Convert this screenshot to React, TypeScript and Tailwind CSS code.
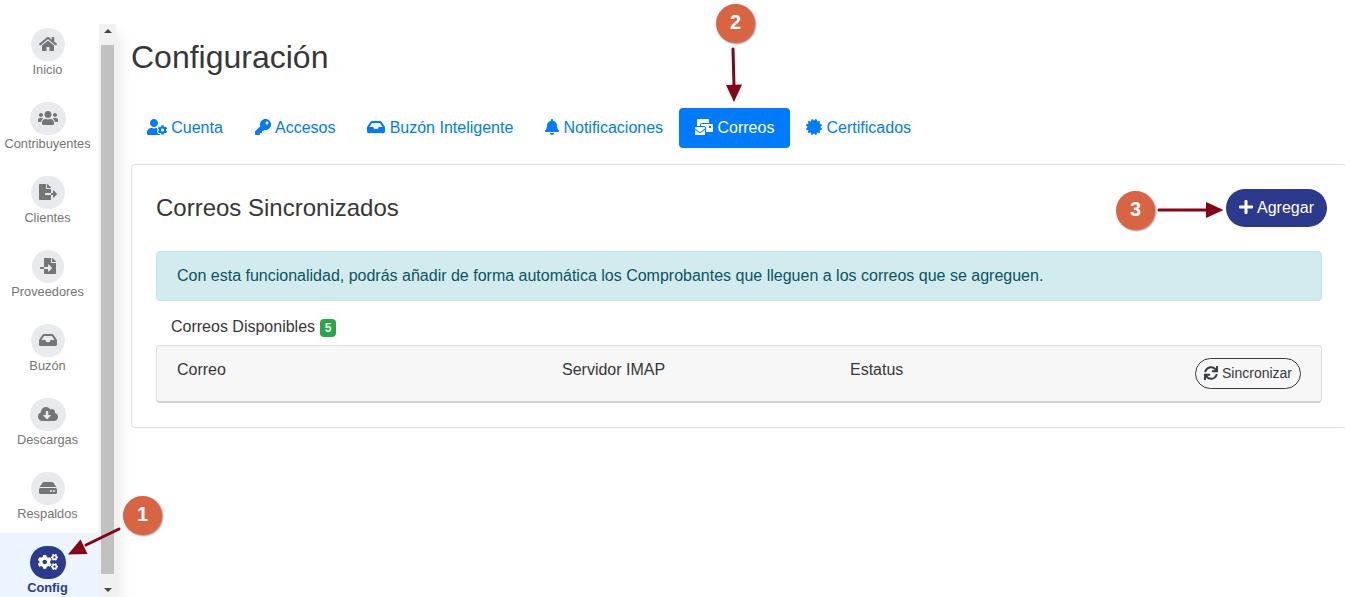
import type { ReactNode } from "react";
import {
  FaBell,
  FaCertificate,
  FaCloudDownloadAlt,
  FaCogs,
  FaFileExport,
  FaFileImport,
  FaHdd,
  FaHome,
  FaInbox,
  FaKey,
  FaMailBulk,
  FaPlus,
  FaSync,
  FaUserCog,
  FaUsers,
} from "react-icons/fa";

type Entry = { label: string; icon: ReactNode; active?: boolean };

const menu: Entry[] = [
  { label: "Inicio", icon: <FaHome className="h-4 w-[18px]" /> },
  { label: "Contribuyentes", icon: <FaUsers className="h-4 w-5" /> },
  { label: "Clientes", icon: <FaFileExport className="h-4 w-[18px]" /> },
  { label: "Proveedores", icon: <FaFileImport className="h-4 w-4" /> },
  { label: "Buzón", icon: <FaInbox className="h-4 w-[18px]" /> },
  { label: "Descargas", icon: <FaCloudDownloadAlt className="h-4 w-5" /> },
  { label: "Respaldos", icon: <FaHdd className="h-4 w-[18px]" /> },
  { label: "Config", icon: <FaCogs className="h-4 w-5" />, active: true },
];

const tabs: Entry[] = [
  { label: "Cuenta", icon: <FaUserCog className="h-4 w-5" /> },
  { label: "Accesos", icon: <FaKey className="h-4 w-4" /> },
  { label: "Buzón Inteligente", icon: <FaInbox className="h-4 w-[18px]" /> },
  { label: "Notificaciones", icon: <FaBell className="h-4 w-[14px]" /> },
  { label: "Correos", icon: <FaMailBulk className="h-4 w-[18px]" />, active: true },
  { label: "Certificados", icon: <FaCertificate className="h-4 w-4" /> },
];

function Sidebar() {
  return (
    <aside className="flex h-full shrink-0 pt-[15px]">
      <nav className="z-10 w-[99px] bg-white">
        {menu.map((item) => (
          <a
            key={item.label}
            className={
              item.active
                ? "flex h-[74px] w-[99px] flex-col items-center bg-[#ebf4ff] pt-[13px] pr-[3px] text-[12.8px] leading-[16px] font-bold text-[#2b3a8c]"
                : "flex h-[74px] w-[99px] flex-col items-center pt-[13px] pr-[3px] text-[12.8px] leading-[16px] text-[#757575]"
            }
          >
            <span
              className={
                item.active
                  ? "flex h-[33px] items-start rounded-[17px] bg-[#2b3a8c] px-2 pt-2 text-white"
                  : "flex h-[33px] items-start rounded-[17px] bg-[#e9eaee] px-2 pt-2"
              }
            >
              {item.icon}
            </span>
            <span className="mt-px mr-px whitespace-nowrap">{item.label}</span>
          </a>
        ))}
      </nav>
      <div className="mt-[9px] flex h-[573px] w-[17px] flex-col items-center bg-[#f1f1f1] shadow-[4px_8px_14px_rgba(0,0,0,0.09)]">
        <div className="flex h-[21px] w-full items-center justify-center pb-[7px]">
          <svg width="8" height="4" viewBox="0 0 8 4">
            <path d="M0 4 4 0l4 4z" fill="#454545" />
          </svg>
        </div>
        <div className="mr-[1px] h-[529px] w-[13px] bg-[#c1c1c1]" />
        <div className="flex h-[23px] w-full justify-center pt-[14px]">
          <svg width="8" height="4" viewBox="0 0 8 4">
            <path d="M0 0h8L4 4z" fill="#454545" />
          </svg>
        </div>
      </div>
    </aside>
  );
}

function Marker({ label }: { label: string }) {
  return (
    <span className="flex h-[39px] w-[39px] items-center justify-center rounded-full bg-[#d96444] pb-[3px] text-[20px] font-bold text-white shadow-[1px_1px_2px_rgba(0,0,0,0.45)]">
      {label}
    </span>
  );
}

function Annotations() {
  return (
    <>
      <svg className="pointer-events-none absolute inset-0 z-20" width="1345" height="597" viewBox="0 0 1345 597">
        <g stroke="#860217" strokeWidth="3" strokeLinecap="round" fill="#860217">
          <path d="M119 529 86 545" />
          <path d="M733 49 734 86" />
          <path d="M1159 210h48" />
          <path d="M68 554.5 80.500 539.500 87.500 554z" stroke="none" />
          <path d="M734 102 726 85l16-.5z" stroke="none" />
          <path d="M1223.500 210 1206 202v16z" stroke="none" />
        </g>
      </svg>
      <div className="absolute top-[496px] left-[123px] z-20">
        <Marker label="1" />
      </div>
      <div className="absolute top-[4px] left-[716px] z-20">
        <Marker label="2" />
      </div>
      <div className="absolute top-[191px] left-[1116px] z-20">
        <Marker label="3" />
      </div>
    </>
  );
}

export default function App() {
  return (
    <div className="relative flex h-[597px] w-[1345px] overflow-hidden bg-white font-['Liberation_Sans',Arial,sans-serif] text-base leading-6 text-[#373737]">
      <Sidebar />
      <main className="ml-[15px] w-[1216px] shrink-0 pt-[38px]">
        <h1 className="text-[32px] leading-[38px]">Configuración</h1>
        <nav className="mt-8 flex h-10">
          {tabs.map((tab) => (
            <a
              key={tab.label}
              className={
                tab.active
                  ? "flex items-center gap-[4.4px] rounded-[4px] bg-[#007bff] px-4 whitespace-nowrap text-white"
                  : "flex items-center gap-[4.2px] px-4 whitespace-nowrap text-[#007bff]"
              }
            >
              <span className="mb-[2px]">{tab.icon}</span>
              <span>{tab.label}</span>
            </a>
          ))}
        </nav>
        <section className="mt-4 h-[264px] rounded-[4px] border border-[#dfdfdf] px-6 pt-6">
          <div className="flex h-[38px] items-center justify-between">
            <h2 className="pb-[2px] text-2xl leading-[29px]">Correos Sincronizados</h2>
            <button className="-mr-[5px] flex h-[38px] w-[101px] items-center justify-center gap-1 rounded-full bg-[#2b3a8c] text-white">
              <FaPlus className="mb-[2px] h-4 w-[14px]" />
              <span>Agregar</span>
            </button>
          </div>
          <div className="mt-6 flex h-[50px] items-center rounded-[4px] border border-[#bee5eb] bg-[#d1ebef] px-5 text-[#0c5460]">
            Con esta funcionalidad, podrás añadir de forma automática los Comprobantes que lleguen a los correos que se agreguen.
          </div>
          <div className="mt-[14px] flex h-6 items-center gap-[5px] pl-[15px]">
            <span>Correos Disponibles</span>
            <span className="mt-[2px] flex h-[18px] w-4 items-center justify-center rounded-[4px] bg-[#28a745] text-xs font-bold text-white">
              5
            </span>
          </div>
          <div className="mt-[6px] flex h-[58px] rounded-[4px] border border-b-2 border-[#dfdfdf] border-b-[#d3d3d3] bg-[#f7f7f7] pt-3 pr-5 pl-5">
            <span className="w-[385px]">Correo</span>
            <span className="w-[288px]">Servidor IMAP</span>
            <span>Estatus</span>
            <button className="ml-auto flex h-[31px] w-[106px] items-center justify-center gap-1 rounded-full border border-[#343a40] pb-[2px] text-sm text-[#343a40]">
              <FaSync className="h-[14px] w-[14px]" />
              <span>Sincronizar</span>
            </button>
          </div>
        </section>
      </main>
      <Annotations />
    </div>
  );
}
